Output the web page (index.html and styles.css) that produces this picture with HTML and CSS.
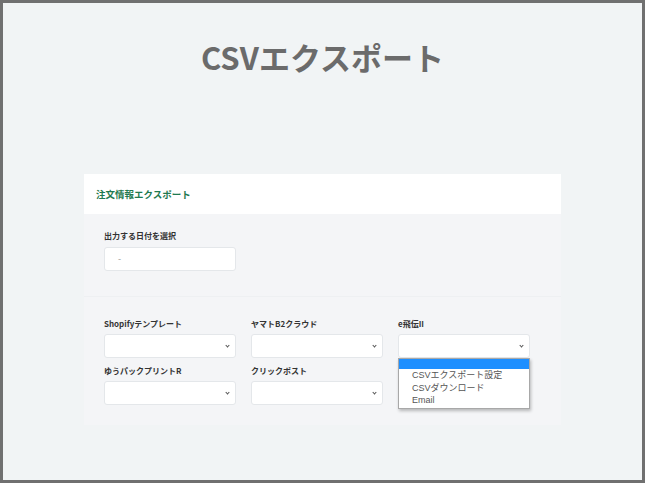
FILE: index.html
```html
<!DOCTYPE html>
<html lang="ja">
<head>
    <meta charset="UTF-8">
    <meta name="viewport" content="width=device-width, initial-scale=1.0">
    <title>CSVエクスポート</title>
    <link rel="stylesheet" href="styles.css">
</head>
<body>
    <div class="frame">
        <h1 class="page-title">CSVエクスポート</h1>

        <div class="card">
            <div class="card-header">注文情報エクスポート</div>

            <div class="card-section date-section">
                <div class="field-label">出力する日付を選択</div>
                <div class="date-input">-</div>
            </div>

            <div class="card-section select-section">
                <div class="select-grid">
                    <div class="field">
                        <div class="field-label">Shopifyテンプレート</div>
                        <div class="select-box"><span class="chevron"></span></div>
                    </div>
                    <div class="field">
                        <div class="field-label">ヤマトB2クラウド</div>
                        <div class="select-box"><span class="chevron"></span></div>
                    </div>
                    <div class="field">
                        <div class="field-label">e飛伝II</div>
                        <div class="select-box">
                            <span class="chevron"></span>
                            <ul class="dropdown">
                                <li class="selected"></li>
                                <li>CSVエクスポート設定</li>
                                <li>CSVダウンロード</li>
                                <li>Email</li>
                            </ul>
                        </div>
                    </div>
                    <div class="field">
                        <div class="field-label">ゆうパックプリントR</div>
                        <div class="select-box"><span class="chevron"></span></div>
                    </div>
                    <div class="field">
                        <div class="field-label">クリックポスト</div>
                        <div class="select-box"><span class="chevron"></span></div>
                    </div>
                </div>
            </div>
        </div>
    </div>
</body>
</html>
```

FILE: styles.css
```css
* {
    box-sizing: border-box;
}

body {
    margin: 0;
    font-family: "Noto Sans CJK JP", "Noto Sans", sans-serif;
}

.frame {
    height: 483px;
    border: 3px solid #707070;
    background-color: #f1f4f5;
    padding-top: 34px;
}

.page-title {
    margin: 0;
    text-align: center;
    font-size: 31px;
    line-height: 40px;
    font-weight: bold;
    color: #6b6b6b;
}

.card {
    width: 477px;
    margin: 97px auto 0;
    background-color: #f4f5f7;
}

.card-header {
    height: 40px;
    line-height: 40px;
    padding-left: 12px;
    background-color: #fff;
    color: #1f7a50;
    font-size: 9.5px;
    font-weight: bold;
}

.card-section {
    padding-left: 20px;
}

.date-section {
    padding-top: 17px;
    padding-bottom: 25px;
    border-bottom: 1px solid #eef0f2;
}

.select-section {
    padding-top: 22px;
    padding-bottom: 20px;
}

.field-label {
    font-size: 8px;
    line-height: 10px;
    font-weight: bold;
    color: #333;
    margin-bottom: 6px;
}

.select-section .field-label {
    margin-bottom: 5px;
}

.date-input {
    width: 132px;
    height: 24px;
    background-color: #fff;
    border: 1px solid #e4e7ea;
    border-radius: 3px;
    padding-left: 13px;
    font-size: 9px;
    line-height: 21px;
    color: #999;
}

.select-grid {
    display: grid;
    grid-template-columns: repeat(3, 132px);
    column-gap: 15px;
    row-gap: 8px;
}

.select-box {
    position: relative;
    height: 24px;
    background-color: #fff;
    border: 1px solid #e4e7ea;
    border-radius: 3px;
}

.chevron {
    position: absolute;
    right: 6px;
    top: 9px;
    width: 3px;
    height: 3px;
    border-right: 1px solid #555;
    border-bottom: 1px solid #555;
    transform: rotate(45deg);
}

.dropdown {
    position: absolute;
    left: -1px;
    top: 23px;
    width: 132px;
    margin: 0;
    padding: 0 0 1px;
    list-style: none;
    background-color: #fff;
    border: 1px solid #a8a8a8;
    box-shadow: 1px 2px 3px rgba(0, 0, 0, 0.25);
    font-family: "Liberation Sans", "Noto Sans CJK JP", sans-serif;
    font-size: 9px;
    color: #555;
    z-index: 2;
}

.dropdown li {
    height: 12.5px;
    line-height: 12.5px;
    padding-left: 13px;
}

.dropdown li.selected {
    height: 10px;
    background-color: #1e8fff;
}
```
